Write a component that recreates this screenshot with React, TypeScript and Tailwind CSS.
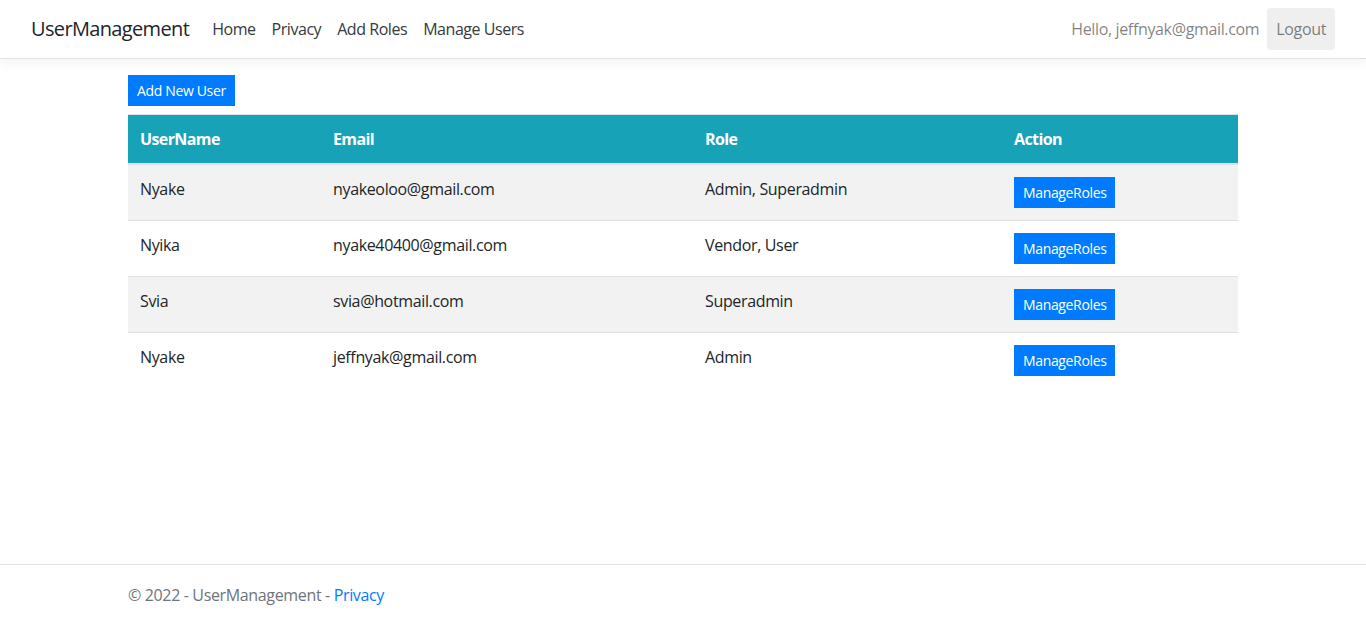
import React from "react";

const users = [
  { name: "Nyake", email: "nyakeoloo@gmail.com", roles: "Admin, Superadmin" },
  { name: "Nyika", email: "nyake40400@gmail.com", roles: "Vendor, User" },
  { name: "Svia", email: "svia@hotmail.com", roles: "Superadmin" },
  { name: "Nyake", email: "jeffnyak@gmail.com", roles: "Admin" },
];

const App = () => {
  return (
    <div className="flex min-h-screen flex-col bg-white text-[#212529] tracking-[-0.35px] font-['Open_Sans',sans-serif]">
      {/* Navbar */}
      <header className="mb-4 border-b border-[#dee2e6] bg-white shadow-[0_4px_12px_rgba(0,0,0,0.05)]">
        <nav className="flex h-[58px] items-center px-[31px]">
          <a className="mr-[23px] text-[20px] leading-[30px] tracking-[-0.65px] text-[#212529]">UserManagement</a>
          <ul className="flex items-center gap-[16px] text-[16px] tracking-[-0.45px] text-[#343a40]">
            <li>Home</li>
            <li>Privacy</li>
            <li>Add Roles</li>
            <li>Manage Users</li>
          </ul>
          <div className="ml-auto flex items-center gap-[8px] text-[16px]">
            <span className="text-[rgba(0,0,0,0.5)]">Hello, jeffnyak@gmail.com</span>
            <button className="h-[42px] rounded-[4px] bg-[#efefef] px-[9px] text-[rgba(0,0,0,0.5)]">
              Logout
            </button>
          </div>
        </nav>
      </header>

      {/* Content */}
      <main className="mx-auto w-[1110px]">
        <button className="mb-[8px] h-[31px] bg-[#007bff] px-[9px] text-[14px] text-white">
          Add New User
        </button>
        <table className="w-full border-collapse text-left text-[16px]">
          <thead>
            <tr className="border-t border-[#dee2e6] bg-[#17a2b8] text-white">
              <th className="w-[193px] border-b-2 border-[#dee2e6] p-[12px] font-bold leading-[24px] tracking-[-0.6px]">UserName</th>
              <th className="w-[372px] border-b-2 border-[#dee2e6] p-[12px] font-bold leading-[24px] tracking-[-0.6px]">Email</th>
              <th className="w-[309px] border-b-2 border-[#dee2e6] p-[12px] font-bold leading-[24px] tracking-[-0.6px]">Role</th>
              <th className="border-b-2 border-[#dee2e6] p-[12px] font-bold leading-[24px] tracking-[-0.6px]">Action</th>
            </tr>
          </thead>
          <tbody>
            {users.map((u, i) => (
              <tr
                key={i}
                className={
                  i === 0
                    ? "bg-[#f2f2f2]"
                    : i % 2 === 0
                    ? "border-t border-[#dee2e6] bg-[#f2f2f2]"
                    : "border-t border-[#dee2e6] bg-white"
                }
              >
                <td className="p-[12px] align-top leading-[24px]">{u.name}</td>
                <td className="p-[12px] align-top leading-[24px]">{u.email}</td>
                <td className="p-[12px] align-top leading-[24px]">{u.roles}</td>
                <td className="p-[12px] align-top">
                  <button className="h-[31px] bg-[#007bff] px-[9px] text-[14px] text-white">
                    ManageRoles
                  </button>
                </td>
              </tr>
            ))}
          </tbody>
        </table>
      </main>

      {/* Footer */}
      <footer className="mt-auto border-t border-[#dee2e6] text-[16px] leading-[60px] text-[#6c757d]">
        <div className="mx-auto w-[1110px]">
          © 2022 - UserManagement - <a className="text-[#007bff]">Privacy</a>
        </div>
      </footer>
    </div>
  );
};

export default App;
